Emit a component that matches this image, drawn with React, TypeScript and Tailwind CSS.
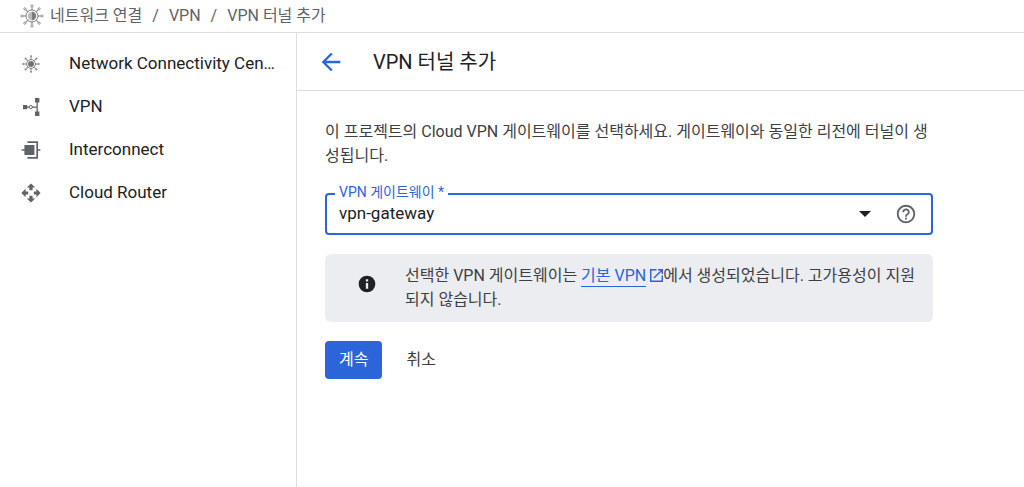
import React from "react";

function ConnectivityIcon({ size }: { size: number }) {
  const angles = [0, 45, 90, 135, 180, 225, 270, 315];
  return (
    <svg width={size} height={size} viewBox="0 0 24 24" fill="none" stroke="currentColor" aria-hidden="true">
      {angles.map((angle) => (
        <g key={angle} transform={`rotate(${angle} 12 12)`} opacity="0.8">
          <path d="M12 6V3" strokeWidth="1" />
          <circle cx="12" cy="1.9" r="1.1" strokeWidth="0.8" />
        </g>
      ))}
      <circle cx="12" cy="12" r="6" strokeWidth="1" opacity="0.85" />
      <circle cx="12" cy="12" r="4.2" fill="currentColor" stroke="none" opacity="0.45" />
      <path d="M12 7.8a4.2 4.2 0 0 1 0 8.4z" fill="currentColor" stroke="none" opacity="0.7" />
    </svg>
  );
}

function HubIcon() {
  return (
    <svg width="20" height="20" viewBox="0 0 20 20" fill="none" stroke="currentColor" aria-hidden="true">
      {[0, 45, 90, 135, 180, 225, 270, 315].map((angle) => (
        <g key={angle} transform={`rotate(${angle} 10 10)`} opacity="0.8">
          <path d="M10 5.4V2.6" strokeWidth="1" />
          <path d="M9 2.2h2" strokeWidth="1.3" />
        </g>
      ))}
      <circle cx="10" cy="10" r="4.4" strokeWidth="1" opacity="0.8" />
      <circle cx="10" cy="10" r="3" fill="currentColor" stroke="none" opacity="0.9" />
    </svg>
  );
}

function VpnIcon() {
  return (
    <svg width="20" height="20" viewBox="0 0 20 20" fill="currentColor" aria-hidden="true">
      <path d="M2 8h4.2v4.2H2zM14 1h4.4v4.4H14zM14 14.6h4.4V19H14z" />
      <path d="M5 10.1h3M11 10.1h5.2M16.2 4v12" fill="none" stroke="currentColor" strokeWidth="1.3" />
      <circle cx="9.8" cy="10.1" r="1.6" fill="none" stroke="currentColor" />
    </svg>
  );
}

function InterconnectIcon() {
  return (
    <svg width="20" height="20" viewBox="0 0 20 20" fill="currentColor" aria-hidden="true">
      <path d="M3.4 5h10v10h-10z" />
      <path d="M.6 9.2h4v1.6h-4zM16 9.2h3.4v1.6H16z" />
      <path d="M6.4 2.2h9.8v15.6H6.4" fill="none" stroke="currentColor" strokeWidth="1.7" />
    </svg>
  );
}

function RouterIcon() {
  return (
    <svg width="20" height="20" viewBox="0 0 20 20" fill="currentColor" aria-hidden="true">
      {[0, 90, 180, 270].map((angle) => (
        <path key={angle} d="M10 .4l4.2 4.2h-2.6v2.6H8.4V4.6H5.8z" transform={`rotate(${angle} 10 10)`} />
      ))}
    </svg>
  );
}

const navItems = [
  { label: "Network Connectivity Center", icon: <HubIcon /> },
  { label: "VPN", icon: <VpnIcon /> },
  { label: "Interconnect", icon: <InterconnectIcon /> },
  { label: "Cloud Router", icon: <RouterIcon /> },
];

export default function App() {
  return (
    <div className="flex min-h-screen flex-col bg-white font-[Roboto,'Noto_Sans_CJK_KR',sans-serif] text-base text-[#202124]">
      {/* Breadcrumbs */}
      <header className="flex h-[33px] items-center gap-1.5 border-b border-[#dadce0] px-5 text-[#5f6368]">
        <ConnectivityIcon size={24} />
        <nav className="flex items-center gap-2">
          <a href="#network">네트워크 연결</a>
          <span className="px-0.5">/</span>
          <a href="#vpn">VPN</a>
          <span className="px-0.5">/</span>
          <span>VPN 터널 추가</span>
        </nav>
      </header>

      <div className="flex flex-1">
        {/* Sidebar */}
        <aside className="w-[297px] shrink-0 border-r border-[#dadce0] py-[9px]">
          {navItems.map((item) => (
            <a key={item.label} href="#" className="flex h-[43px] items-center gap-7 pr-5 pl-[21px] text-[17px]">
              <span className="shrink-0 text-[#5f6368]">{item.icon}</span>
              <span className="truncate">{item.label}</span>
            </a>
          ))}
        </aside>

        <main className="min-w-0 flex-1">
          <div className="flex h-[58px] items-center gap-7 border-b border-[#dadce0] px-5">
            <button type="button" aria-label="뒤로" className="text-[#2b65d9]">
              <svg width="28" height="28" viewBox="0 0 24 24" fill="currentColor">
                <path d="M20 11H7.83l5.59-5.59L12 4l-8 8 8 8 1.41-1.41L7.83 13H20z" />
              </svg>
            </button>
            <h1 className="text-xl">VPN 터널 추가</h1>
          </div>

          <form className="max-w-[664px] px-7 pt-[29px]">
            <p className="leading-6 text-[#3c4043]">
              이 프로젝트의 Cloud VPN 게이트웨이를 선택하세요. 게이트웨이와 동일한 리전에 터널이 생성됩니다.
            </p>

            <fieldset className="mt-4 rounded border-2 border-[#2b65d9] px-2">
              <legend className="px-1 pb-1 text-sm leading-4 text-[#2b65d9]">
                <label htmlFor="gateway">VPN 게이트웨이 *</label>
              </legend>
              <div className="flex h-[29px] items-center gap-5 pr-1.5 pb-2.5 pl-1">
                <div className="relative flex flex-1 items-center">
                  <select id="gateway" className="w-full appearance-none bg-transparent text-[17px] outline-none">
                    <option>vpn-gateway</option>
                  </select>
                  <svg width="12" height="6" viewBox="0 0 12 6" fill="currentColor" className="pointer-events-none absolute right-1">
                    <path d="M0 0h12L6 6z" />
                  </svg>
                </div>
                <button type="button" aria-label="도움말" className="text-[#5f6368]">
                  <svg width="22" height="22" viewBox="0 0 24 24" fill="currentColor">
                    <path d="M11 18h2v-2h-2v2zm1-16C6.48 2 2 6.48 2 12s4.48 10 10 10 10-4.48 10-10S17.52 2 12 2zm0 18c-4.41 0-8-3.59-8-8s3.59-8 8-8 8 3.59 8 8-3.59 8-8 8zm0-14c-2.21 0-4 1.79-4 4h2c0-1.1.9-2 2-2s2 .9 2 2c0 2-3 1.75-3 5h2c0-2.25 3-2.5 3-5 0-2.21-1.79-4-4-4z" />
                  </svg>
                </button>
              </div>
            </fieldset>

            <div className="mt-[19px] flex items-start gap-7 rounded-md bg-[#ecedf1] py-2.5 pr-3 pl-8">
              <svg width="20" height="20" viewBox="0 0 24 24" fill="currentColor" className="mt-2.5 shrink-0" aria-hidden="true">
                <path d="M12 2a10 10 0 1 0 0 20 10 10 0 0 0 0-20zm1.4 15.6h-2.8v-6.8h2.8zm0-8.6h-2.8V6.4h2.8z" />
              </svg>
              <p className="leading-6 text-[#3c4043]">
                선택한 VPN 게이트웨이는{" "}
                <a href="#classic-vpn" className="text-[#2b65d9]">
                  <span className="border-b border-[#2b65d9] pb-px">기본 VPN</span>
                  <svg width="13" height="13" viewBox="3 3 18 18" fill="currentColor" className="ml-1 inline-block align-[-1px]" aria-hidden="true">
                    <path d="M19 19H5V5h7V3H3v18h18v-9h-2zM14 3v2h3.59l-9.83 9.83 1.41 1.41L19 6.41V10h2V3z" />
                  </svg>
                </a>
                에서 생성되었습니다. 고가용성이 지원되지 않습니다.
              </p>
            </div>

            <div className="mt-[19px] flex gap-2">
              <button type="button" className="h-[38px] rounded bg-[#2b65d9] px-3.5 text-white">계속</button>
              <button type="button" className="h-[38px] px-4 text-[#3c4043]">취소</button>
            </div>
          </form>
        </main>
      </div>
    </div>
  );
}
